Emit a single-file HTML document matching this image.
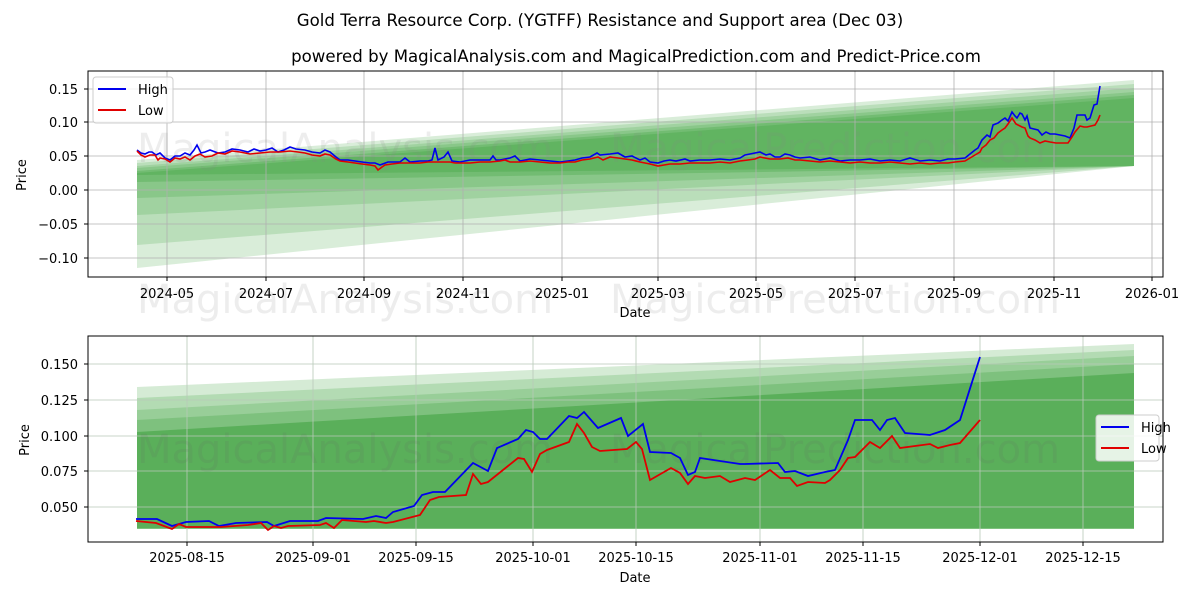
<!DOCTYPE html>
<html><head><meta charset="utf-8"><style>body{margin:0;background:#fff}svg{display:block}text{font-family:"DejaVu Sans","Liberation Sans",sans-serif}</style></head><body>
<svg width="1200" height="600" viewBox="0 0 1200 600" xmlns="http://www.w3.org/2000/svg">
<rect width="1200" height="600" fill="#fff"/>
<text x="600" y="26" font-size="16.6" text-anchor="middle">Gold Terra Resource Corp. (YGTFF) Resistance and Support area (Dec 03)</text>
<text x="636" y="62" font-size="16.6" text-anchor="middle">powered by MagicalAnalysis.com and MagicalPrediction.com and Predict-Price.com</text>

<!-- TOP -->
<g fill="#2e9a2e">
<polygon points="137,160 1134,80 1134,166 137,268" fill-opacity="0.18"/>
<polygon points="137,163 1134,84 1134,166 137,245" fill-opacity="0.18"/>
<polygon points="137,166 1134,88 1134,166 137,215" fill-opacity="0.18"/>
<polygon points="137,168 1134,92 1134,166 137,198" fill-opacity="0.2"/>
<polygon points="137,171 1134,95 1134,166 137,182" fill-opacity="0.25"/>
<polygon points="137,173 1134,98 1134,166 137,175" fill-opacity="0.25"/>
</g>
<g stroke="#b0b0b0" stroke-width="0.8">
<line x1="88" x2="1163" y1="89" y2="89"/><line x1="88" x2="1163" y1="122" y2="122"/><line x1="88" x2="1163" y1="156" y2="156"/><line x1="88" x2="1163" y1="190" y2="190"/><line x1="88" x2="1163" y1="224" y2="224"/><line x1="88" x2="1163" y1="258" y2="258"/>
<line y1="71" y2="277" x1="167" x2="167"/><line y1="71" y2="277" x1="266" x2="266"/><line y1="71" y2="277" x1="364" x2="364"/><line y1="71" y2="277" x1="463" x2="463"/><line y1="71" y2="277" x1="562" x2="562"/><line y1="71" y2="277" x1="658" x2="658"/><line y1="71" y2="277" x1="756" x2="756"/><line y1="71" y2="277" x1="855" x2="855"/><line y1="71" y2="277" x1="954" x2="954"/><line y1="71" y2="277" x1="1054" x2="1054"/><line y1="71" y2="277" x1="1152" x2="1152"/>
</g>
<text x="345" y="162" font-size="40" fill="#888" fill-opacity="0.15" text-anchor="middle">MagicalAnalysis.com</text>
<text x="835" y="162" font-size="40" fill="#888" fill-opacity="0.15" text-anchor="middle">MagicalPrediction.com</text>
<text x="345" y="313" font-size="40" fill="#888" fill-opacity="0.15" text-anchor="middle">MagicalAnalysis.com</text>
<text x="835" y="313" font-size="40" fill="#888" fill-opacity="0.15" text-anchor="middle">MagicalPrediction.com</text>
<polyline fill="none" stroke="#0000ee" stroke-width="1.6" points="137,150 141,153 145,154 149,152 152,152 156,155 160,153 165,158 170,160 175,156 180,156 185,153 190,155 194,150 197,145 201,153 205,152 210,150 218,153 225,152 232,149 240,150 248,152 254,149 260,151 266,150 272,148 278,152 284,150 290,147 296,149 305,150 312,152 320,153 325,150 330,152 336,157 340,160 348,160 355,161 362,162 370,163 375,163 380,165 388,162 400,162 405,158 410,162 420,161 428,161 432,160 435,148 438,160 444,157 448,152 452,161 460,162 470,160 480,160 490,160 493,156 496,160 500,160 510,158 515,156 520,161 530,159 540,160 550,161 560,162 568,161 575,160 582,158 590,157 597,153 600,155 610,154 618,153 625,157 632,156 640,160 645,158 650,162 658,163 664,161 670,160 676,161 685,159 690,161 700,160 710,160 720,159 730,160 740,158 745,155 750,154 760,152 766,155 770,154 775,157 780,157 785,154 790,155 795,157 800,158 810,157 820,160 830,158 840,161 850,160 860,160 870,159 880,161 890,160 900,161 910,158 920,161 930,160 940,161 948,159 955,159 965,158 970,154 975,150 978,148 982,140 987,135 990,137 993,125 998,123 1002,120 1005,118 1008,121 1012,112 1015,116 1017,118 1020,113 1022,114 1025,120 1027,116 1030,128 1034,129 1038,130 1042,135 1046,132 1050,134 1055,134 1060,135 1065,136 1070,138 1074,128 1077,115 1082,115 1085,115 1087,120 1090,118 1094,105 1097,104 1100,86"/>
<polyline fill="none" stroke="#e00000" stroke-width="1.6" points="137,151 141,155 145,157 150,155 155,155 158,160 160,158 165,159 170,162 175,158 180,159 185,157 190,160 195,156 200,154 205,157 212,156 218,153 225,154 232,151 240,152 250,154 260,153 270,152 280,152 290,151 298,152 305,153 312,155 320,156 325,154 330,155 336,159 340,161 348,162 355,163 362,164 370,165 375,166 378,170 382,167 385,165 392,164 400,163 410,163 420,163 428,162 435,162 445,162 450,162 455,163 460,163 470,163 480,162 490,162 500,161 505,160 510,162 520,162 530,161 540,162 550,163 560,163 568,162 575,162 582,160 590,159 598,157 603,160 610,157 618,158 625,159 632,160 640,162 650,164 658,166 664,165 670,164 680,164 690,163 700,163 710,163 720,162 730,163 740,161 748,160 755,159 760,157 770,159 780,159 788,158 795,160 800,160 810,161 820,162 830,161 840,162 850,163 860,162 870,163 880,163 890,162 900,163 910,164 920,163 930,164 940,163 948,163 955,162 965,161 970,158 975,155 980,152 982,148 986,145 990,140 994,138 998,133 1002,130 1005,128 1008,124 1012,118 1016,124 1018,125 1022,127 1025,128 1028,136 1030,138 1035,140 1040,143 1045,141 1050,142 1056,143 1060,143 1065,143 1068,143 1072,137 1075,132 1080,126 1084,127 1087,127 1091,126 1095,125 1098,120 1100,115"/>
<rect x="88" y="71" width="1075" height="206" fill="none" stroke="#000" stroke-width="1"/>
<g font-size="13" text-anchor="end">
<text x="78" y="94">0.15</text><text x="78" y="127">0.10</text><text x="78" y="161">0.05</text><text x="78" y="195">0.00</text><text x="78" y="229">−0.05</text><text x="78" y="263">−0.10</text>
</g>
<g stroke="#000"><line x1="84" x2="88" y1="89" y2="89"/><line x1="84" x2="88" y1="122" y2="122"/><line x1="84" x2="88" y1="156" y2="156"/><line x1="84" x2="88" y1="190" y2="190"/><line x1="84" x2="88" y1="224" y2="224"/><line x1="84" x2="88" y1="258" y2="258"/>
<line y1="277" y2="281" x1="167" x2="167"/><line y1="277" y2="281" x1="266" x2="266"/><line y1="277" y2="281" x1="364" x2="364"/><line y1="277" y2="281" x1="463" x2="463"/><line y1="277" y2="281" x1="562" x2="562"/><line y1="277" y2="281" x1="658" x2="658"/><line y1="277" y2="281" x1="756" x2="756"/><line y1="277" y2="281" x1="855" x2="855"/><line y1="277" y2="281" x1="954" x2="954"/><line y1="277" y2="281" x1="1054" x2="1054"/><line y1="277" y2="281" x1="1152" x2="1152"/></g>
<g font-size="13" text-anchor="middle">
<text x="167" y="298">2024-05</text><text x="266" y="298">2024-07</text><text x="364" y="298">2024-09</text><text x="463" y="298">2024-11</text><text x="562" y="298">2025-01</text><text x="658" y="298">2025-03</text><text x="756" y="298">2025-05</text><text x="855" y="298">2025-07</text><text x="954" y="298">2025-09</text><text x="1054" y="298">2025-11</text><text x="1152" y="298">2026-01</text>
<text x="635" y="317">Date</text>
</g>
<text transform="translate(26,175) rotate(-90)" font-size="13" text-anchor="middle">Price</text>
<rect x="93" y="77" width="80" height="46" rx="3" fill="#fff" fill-opacity="0.8" stroke="#ccc"/>
<line x1="98" x2="126" y1="89" y2="89" stroke="#0000ee" stroke-width="2"/><text x="138" y="94" font-size="13">High</text>
<line x1="98" x2="126" y1="110" y2="110" stroke="#e00000" stroke-width="2"/><text x="138" y="115" font-size="13">Low</text>

<!-- BOTTOM -->
<g fill="#2e9a2e">
<polygon points="137,387 1134,344 1134,529 137,529" fill-opacity="0.2"/>
<polygon points="137,398 1134,350 1134,529 137,529" fill-opacity="0.2"/>
<polygon points="137,410 1134,356 1134,529 137,529" fill-opacity="0.2"/>
<polygon points="137,420 1134,364 1134,529 137,529" fill-opacity="0.25"/>
<polygon points="137,432 1134,373 1134,528 137,528" fill-opacity="0.45"/>
</g>
<g stroke="#b8c8b8" stroke-width="0.8">
<line x1="88" x2="1163" y1="364" y2="364"/><line x1="88" x2="1163" y1="400" y2="400"/><line x1="88" x2="1163" y1="436" y2="436"/><line x1="88" x2="1163" y1="471" y2="471"/><line x1="88" x2="1163" y1="507" y2="507"/>
<line y1="336" y2="542" x1="187" x2="187"/><line y1="336" y2="542" x1="313" x2="313"/><line y1="336" y2="542" x1="416" x2="416"/><line y1="336" y2="542" x1="533" x2="533"/><line y1="336" y2="542" x1="636" x2="636"/><line y1="336" y2="542" x1="760" x2="760"/><line y1="336" y2="542" x1="863" x2="863"/><line y1="336" y2="542" x1="980" x2="980"/><line y1="336" y2="542" x1="1083" x2="1083"/>
</g>
<text x="345" y="463" font-size="40" fill="#666" fill-opacity="0.12" text-anchor="middle">MagicalAnalysis.com</text>
<text x="835" y="463" font-size="40" fill="#666" fill-opacity="0.12" text-anchor="middle">MagicalPrediction.com</text>
<polyline fill="none" stroke="#0000ee" stroke-width="1.8" points="136,519 157,519 172,526 186,522 209,521 219,526 236,523 267,522 274,526 290,521 318,521 326,518 363,519 376,516 386,518 393,512 414,506 422,495 433,492 445,492 473,463 488,471 497,448 518,439 526,430 533,432 540,439 547,439 569,416 577,418 584,412 598,428 621,418 628,436 643,424 650,452 671,453 680,458 688,475 695,472 700,458 740,464 745,464 778,463 785,472 795,471 808,476 825,472 835,470 848,440 855,420 872,420 880,430 887,420 895,418 905,433 930,435 945,430 960,420 980,357"/>
<polyline fill="none" stroke="#e00000" stroke-width="1.8" points="136,521 156,523 172,529 179,524 186,527 221,527 248,525 261,523 268,530 274,526 281,528 288,526 320,525 326,523 334,528 342,520 366,522 374,521 386,523 393,522 420,515 430,500 439,497 466,495 473,474 481,484 488,482 518,458 524,459 532,472 540,454 547,450 569,442 577,424 584,433 592,447 600,451 627,449 636,442 642,449 650,480 671,468 680,473 688,484 695,476 705,478 720,476 730,482 745,478 755,480 770,470 780,478 790,478 797,486 808,482 825,483 830,480 840,470 848,458 855,457 870,442 880,448 892,436 900,448 915,446 930,444 938,448 950,445 960,443 980,420"/>
<rect x="88" y="336" width="1075" height="206" fill="none" stroke="#000" stroke-width="1"/>
<g font-size="13" text-anchor="end">
<text x="78" y="369">0.150</text><text x="78" y="405">0.125</text><text x="78" y="441">0.100</text><text x="78" y="476">0.075</text><text x="78" y="512">0.050</text>
</g>
<g stroke="#000"><line x1="84" x2="88" y1="364" y2="364"/><line x1="84" x2="88" y1="400" y2="400"/><line x1="84" x2="88" y1="436" y2="436"/><line x1="84" x2="88" y1="471" y2="471"/><line x1="84" x2="88" y1="507" y2="507"/>
<line y1="542" y2="546" x1="187" x2="187"/><line y1="542" y2="546" x1="313" x2="313"/><line y1="542" y2="546" x1="416" x2="416"/><line y1="542" y2="546" x1="533" x2="533"/><line y1="542" y2="546" x1="636" x2="636"/><line y1="542" y2="546" x1="760" x2="760"/><line y1="542" y2="546" x1="863" x2="863"/><line y1="542" y2="546" x1="980" x2="980"/><line y1="542" y2="546" x1="1083" x2="1083"/></g>
<g font-size="13" text-anchor="middle">
<text x="187" y="562">2025-08-15</text><text x="313" y="562">2025-09-01</text><text x="416" y="562">2025-09-15</text><text x="533" y="562">2025-10-01</text><text x="636" y="562">2025-10-15</text><text x="760" y="562">2025-11-01</text><text x="863" y="562">2025-11-15</text><text x="980" y="562">2025-12-01</text><text x="1083" y="562">2025-12-15</text>
<text x="635" y="582">Date</text>
</g>
<text transform="translate(29,440) rotate(-90)" font-size="13" text-anchor="middle">Price</text>
<rect x="1096" y="415" width="63" height="46" rx="3" fill="#fff" fill-opacity="0.85" stroke="#ccc"/>
<line x1="1101" x2="1129" y1="427" y2="427" stroke="#0000ee" stroke-width="2"/><text x="1141" y="432" font-size="13">High</text>
<line x1="1101" x2="1129" y1="448" y2="448" stroke="#e00000" stroke-width="2"/><text x="1141" y="453" font-size="13">Low</text>
</svg>
</body></html>
